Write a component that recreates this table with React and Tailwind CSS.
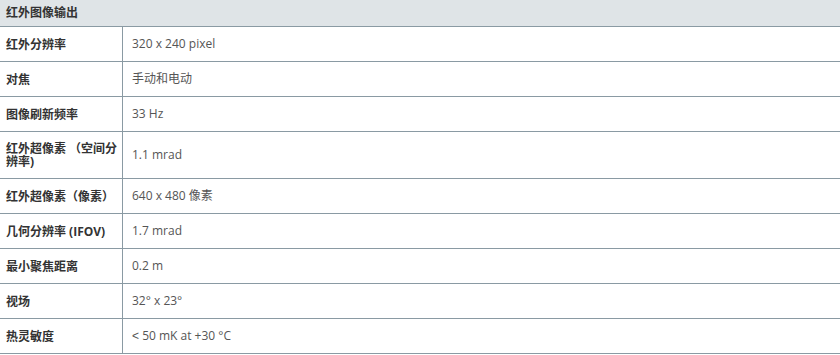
const rows = [
  { label: '红外分辨率', value: '320 x 240 pixel' },
  { label: '对焦', value: '手动和电动' },
  { label: '图像刷新频率', value: '33 Hz' },
  { label: ['红外超像素 （空间分', '辨率)'], value: '1.1 mrad' },
  { label: '红外超像素（像素）', value: '640 x 480 像素' },
  { label: '几何分辨率 (IFOV)', value: '1.7 mrad' },
  { label: '最小聚焦距离', value: '0.2 m' },
  { label: '视场', value: '32° x 23°' },
  { label: '热灵敏度', value: '˂ 50 mK at +30 °C' },
];

export default function App() {
  return (
    <div className="w-[840px] bg-white font-['Open_Sans','Noto_Sans_CJK_SC',sans-serif] text-[12px]">
      <div className="flex h-[27px] items-center border-b border-[#8a9aa3] bg-[#dfe4e7] px-[6px] pb-[1px] font-bold text-[#333]">
        红外图像输出
      </div>
      {rows.map((row, i) => {
        const multi = Array.isArray(row.label);
        return (
          <div
            key={i}
            className={`flex border-b border-[#8a9aa3] ${multi ? 'h-[47px]' : 'h-[35px]'}`}
          >
            <div className="flex w-[123px] shrink-0 items-center border-r border-[#8a9aa3] pl-[6px] font-bold leading-[13px] text-[#333]">
              {multi ? (
                <span>
                  {row.label[0]}
                  <br />
                  {row.label[1]}
                </span>
              ) : (
                row.label
              )}
            </div>
            <div className="flex items-center pl-[9px] text-[#555]">{row.value}</div>
          </div>
        );
      })}
    </div>
  );
}
